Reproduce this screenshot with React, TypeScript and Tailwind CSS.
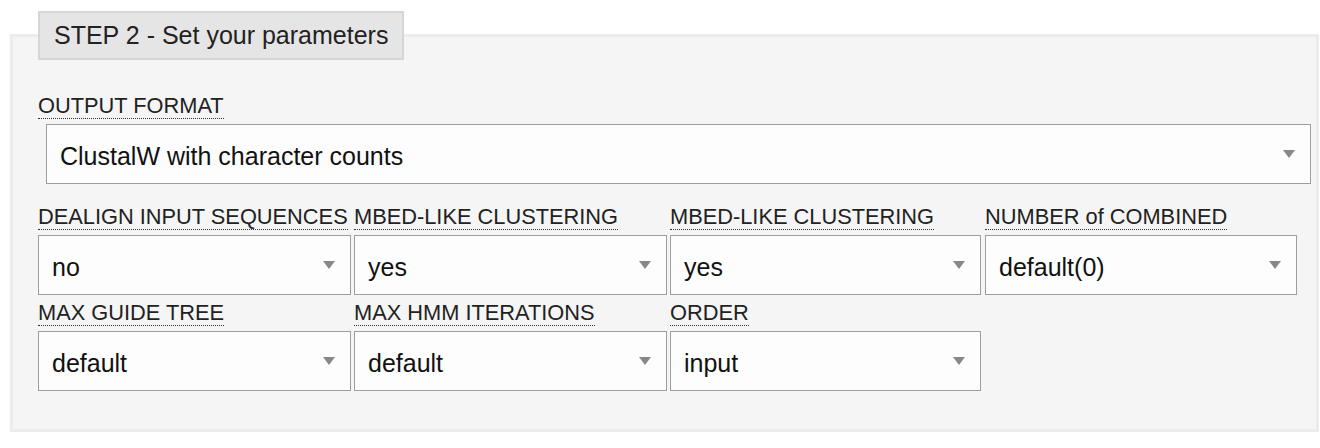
import React from "react";

const Arrow = () => (
  <svg width="12" height="8" viewBox="0 0 12 8" className="shrink-0">
    <polygon points="0,0 12,0 6,8" fill="#888888" />
  </svg>
);

function Select({ value, w, className = "" }: { value: string; w: string; className?: string }) {
  return (
    <div
      className={`flex h-[60px] items-center justify-between border border-[#9e9e9e] bg-[#fdfdfd] pl-[13px] pr-[15px] text-[25px] text-[#111] ${w} ${className}`}
    >
      <span className="pt-[3px] leading-[30px]">{value}</span>
      <Arrow />
    </div>
  );
}

function Label({ text }: { text: string }) {
  return (
    <div className="flex">
      <span className="block whitespace-nowrap border-b border-dotted border-[#333] pt-[1px] text-[21.8px] leading-[24px] text-[#222]">
        {text}
      </span>
    </div>
  );
}

function Field({ label, value, w }: { label: string; value: string; w: string }) {
  return (
    <div className={`flex flex-col gap-[5px] ${w}`}>
      <Label text={label} />
      <Select value={value} w={w} />
    </div>
  );
}

export default function App() {
  return (
    <div
      className="h-[448px] w-[1320px] bg-white pl-[10px] pt-[11px]"
      style={{ fontFamily: '"Liberation Sans", Arial, sans-serif' }}
    >
      <div className="relative z-10 ml-[28px] flex h-[49px] w-[366px] items-center border-2 border-[#d6d6d6] bg-[#e5e5e5] pl-[14px] text-[25px] text-[#222]">
        STEP 2 - Set your parameters
      </div>
      <div className="mt-[-26px] h-[398px] w-[1309px] border-[3px] border-[#ececec] bg-[#f5f5f5] pl-[25px] pt-[56px]">
        <div className="flex flex-col gap-[5px]">
          <Label text="OUTPUT FORMAT" />
          <Select value="ClustalW with character counts" w="w-[1265px]" className="ml-[8px]" />
        </div>
        <div className="mt-[20px] flex">
          <Field label="DEALIGN INPUT SEQUENCES" value="no" w="w-[313px]" />
          <div className="ml-[3px]">
            <Field label="MBED-LIKE CLUSTERING" value="yes" w="w-[313px]" />
          </div>
          <div className="ml-[3px]">
            <Field label="MBED-LIKE CLUSTERING" value="yes" w="w-[311px]" />
          </div>
          <div className="ml-[4px]">
            <Field label="NUMBER of COMBINED" value="default(0)" w="w-[312px]" />
          </div>
        </div>
        <div className="mt-[5px] flex">
          <Field label="MAX GUIDE TREE" value="default" w="w-[313px]" />
          <div className="ml-[3px]">
            <Field label="MAX HMM ITERATIONS" value="default" w="w-[313px]" />
          </div>
          <div className="ml-[3px]">
            <Field label="ORDER" value="input" w="w-[311px]" />
          </div>
        </div>
      </div>
    </div>
  );
}
